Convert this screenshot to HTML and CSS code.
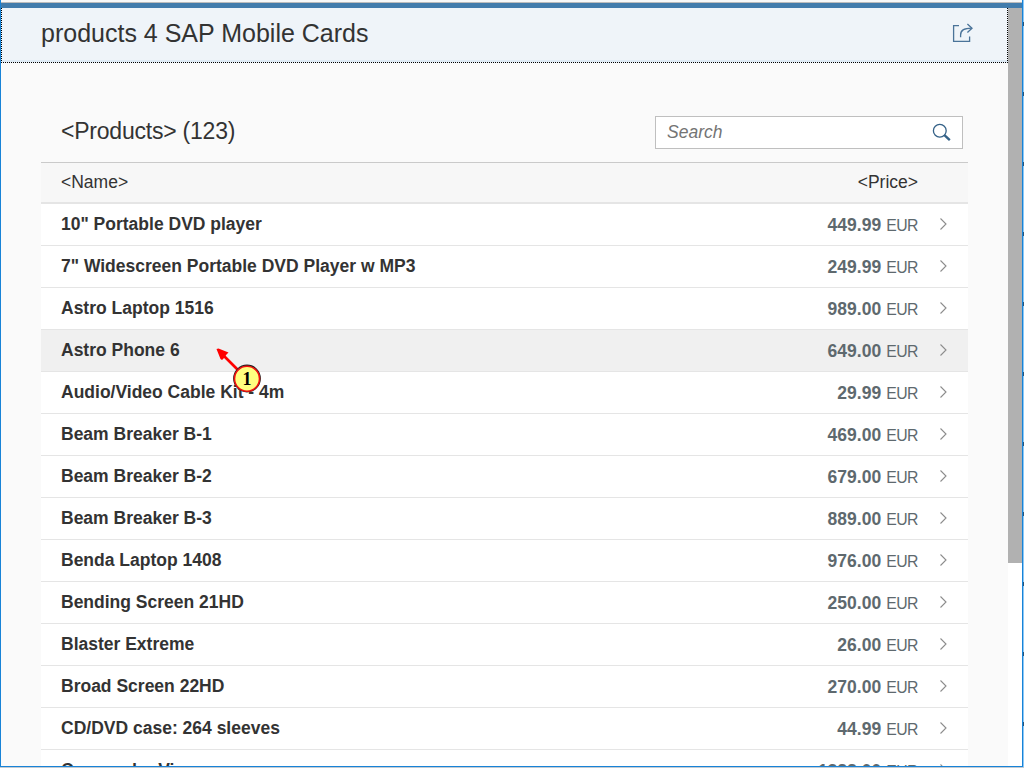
FILE: index.html
```html
<!DOCTYPE html>
<html lang="en">
<head>
<meta charset="utf-8">
<title>products 4 SAP Mobile Cards</title>
<link rel="stylesheet" href="styles.css">
</head>
<body>
<div class="window">
  <div class="topbar"></div>
  <div class="view">
    <div class="content">
      <header class="header">
        <h1>products 4 SAP Mobile Cards</h1>
        <svg class="share" width="22" height="20" viewBox="0 0 22 20" fill="none" stroke="#4a7399" stroke-width="1.3"><path d="M7 2.6H1.6V18.4H17.6V13.5"/><path d="M8.6 14.2V12C8.6 7.5 11.5 5.2 19.5 5.2"/><path d="M15.4 1L20 5.2L15.4 9.4"/></svg>
      </header>
      <main class="page">
        <div class="toolbar">
          <h2>&lt;Products&gt; (123)</h2>
          <div class="search"><span>Search</span><svg width="20" height="20" viewBox="0 0 20 20" fill="none" stroke="#346187"><circle cx="7.8" cy="7.8" r="6.4" stroke-width="1.3"/><path d="M12.4 12.2L17.8 17.2" stroke-width="2.4"/></svg></div>
        </div>
        <div class="table">
          <div class="thead"><span>&lt;Name&gt;</span><span>&lt;Price&gt;</span></div>
          <div id="rows"></div>
        </div>
      </main>
    </div>
    <div class="track"><div class="thumb"></div></div>
  </div>
  <svg class="callout" width="50" height="50" viewBox="0 0 50 50"><path d="M8 9L26 27" stroke="#f00" stroke-width="2.6"/><path d="M2.5 4L4.5 3.5L14.5 7.5L12 10L11 12L8 15L6.5 14Z" fill="#f00"/><circle cx="33" cy="33.5" r="13.2" fill="#ffff80" stroke="#222" stroke-width="1.4"/><circle cx="33" cy="33.7" r="12.5" fill="#ffff80" stroke="#f01010" stroke-width="1.6"/><text x="33" y="40">1</text></svg>
</div>
<div class="edge"><i></i><i></i><i></i><i></i><i></i><i></i><i></i><i></i><i></i><i></i><i></i></div>
<script src="rows.js"></script>
</body>
</html>
```
FILE: styles.css
```css
* { box-sizing: border-box; }
html, body { height: 100%; overflow: hidden; }
body {
  margin: 0;
  display: grid;
  grid-template: 767px 1px / 1023px 1px;
  background: #c3cbd3;
  color: #333;
  font-family: "Liberation Sans", Arial, sans-serif;
}
h1, h2 { margin: 0; font-weight: 400; }
.window {
  position: relative;
  display: flex;
  flex-direction: column;
  overflow: hidden;
  border: 1px solid #1883d7;
  border-top: 0;
  background: #fafafa;
}
.topbar { flex: none; height: 8px; border-bottom: 5px solid #427cac; background: linear-gradient(#f8f8f8 2px, #bcbcbc 2px); }
.view { display: flex; flex: 1; min-height: 0; }
.content { width: 1007px; overflow: hidden; }
.header {
  display: flex;
  justify-content: space-between;
  height: 55px;
  padding: 0 33px 0 39px;
  border: 1px dotted #000;
  border-top: 0;
  background: linear-gradient(#eff4f9 52px, #dfebf5 52px);
}
.header h1 { font-size: 25px; line-height: 50px; white-space: nowrap; }
.share { margin-top: 15px; }
.track { width: 14px; background: #fff; }
.thumb { height: 555px; background: #b1b1b1; }
.page { padding: 53px 40px 0; }
.toolbar { display: flex; justify-content: space-between; height: 46px; padding: 0 5px 0 20px; }
.toolbar h2 { font-size: 23px; line-height: 31px; letter-spacing: -0.22px; }
.search {
  display: flex;
  justify-content: space-between;
  width: 308px;
  height: 33px;
  padding: 0 10px 0 11px;
  border: 1px solid #bfbfbf;
  background: #fff;
  color: #747474;
  font-size: 17.5px;
  font-style: italic;
  line-height: 31px;
}
.search svg { margin-top: 6px; }
.table { border-top: 1px solid #cacaca; background: #fff; }
.thead {
  display: flex;
  justify-content: space-between;
  height: 41px;
  padding: 0 50px 0 20px;
  border-bottom: 2px solid #e5e5e5;
  background: #f7f7f7;
  font-size: 17.5px;
  line-height: 38px;
}
.row { display: flex; height: 42px; padding-left: 20px; border-bottom: 1px solid #e5e5e5; line-height: 40px; font-size: 17.5px; }
.row.hover { background: #f0f0f0; }
.name { flex: 1; font-weight: 700; }
.price { display: flex; align-items: baseline; gap: 5px; color: #5e696e; line-height: 42px; }
.cur { font-size: 15.8px; letter-spacing: -0.5px; }
.row svg { margin: 13px 19px 0 21px; }
.callout { position: absolute; left: 213px; top: 345px; }
.callout text { font: 700 18px "Liberation Serif", serif; fill: #000; text-anchor: middle; }
.edge { display: flex; flex-direction: column; gap: 66px; padding-top: 22px; background: #8ec8f5; overflow: hidden; }
.edge i { flex: none; width: 1px; height: 4px; background: #285577; }
```
FILE: rows.js
```javascript
const products = [
  ['10" Portable DVD player', '449.99'],
  ['7" Widescreen Portable DVD Player w MP3', '249.99'],
  ['Astro Laptop 1516', '989.00'],
  ['Astro Phone 6', '649.00'],
  ['Audio/Video Cable Kit - 4m', '29.99'],
  ['Beam Breaker B-1', '469.00'],
  ['Beam Breaker B-2', '679.00'],
  ['Beam Breaker B-3', '889.00'],
  ['Benda Laptop 1408', '976.00'],
  ['Bending Screen 21HD', '250.00'],
  ['Blaster Extreme', '26.00'],
  ['Broad Screen 22HD', '270.00'],
  ['CD/DVD case: 264 sleeves', '44.99'],
  ['Camcorder View', '1388.00']
];
document.getElementById('rows').innerHTML = products.map(([name, price], i) =>
  `<div class="row${i === 3 ? ' hover' : ''}"><span class="name">${name}</span><span class="price"><b>${price}</b><span class="cur">EUR</span></span><svg width="10" height="14" viewBox="0 0 10 14" fill="none" stroke="#8c8c8c" stroke-width="1.1"><path d="M1.5 1.5L7 7L1.5 12.5"/></svg></div>`
).join('');
```
